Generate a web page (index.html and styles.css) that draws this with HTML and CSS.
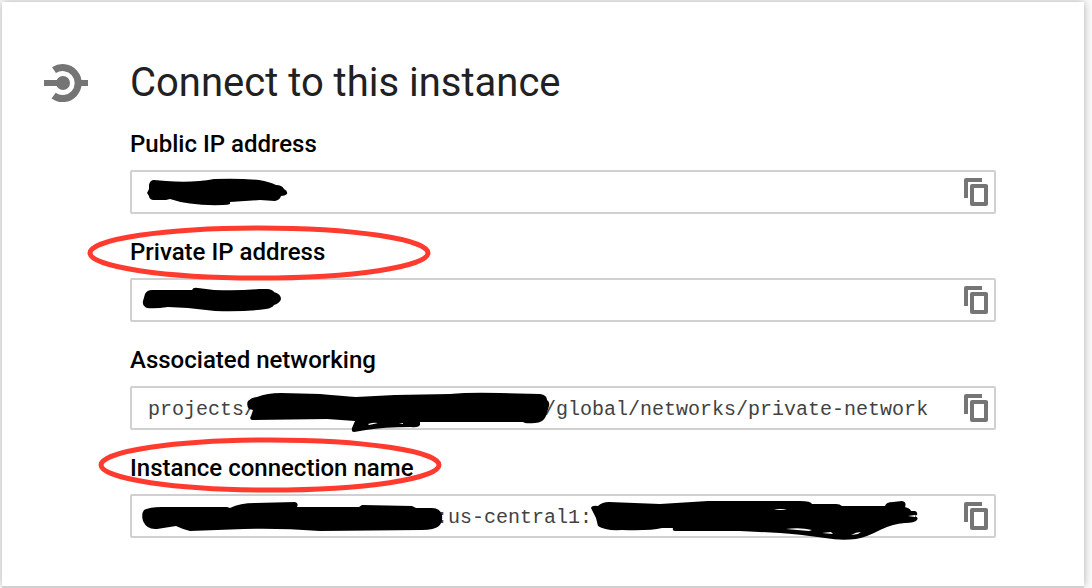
FILE: index.html
```html
<!DOCTYPE html>
<html lang="en">
<head>
<meta charset="utf-8">
<title>Connect to this instance</title>
<link rel="stylesheet" href="styles.css">
</head>
<body>
<svg class="symbols" aria-hidden="true">
  <symbol id="copy" viewBox="0 0 24 28">
    <path d="M0 20V2Q0 0 2 0H18V4H4V20Z"/>
    <path fill-rule="evenodd" d="M8 6H22Q24 6 24 8V26Q24 28 22 28H8Q6 28 6 26V8Q6 6 8 6ZM10 10V24H20V10Z"/>
  </symbol>
</svg>
<main class="card">
  <svg class="connect-icon" viewBox="44 62 44 42" aria-hidden="true">
    <path class="ring" d="M54 70.200A15.500 15.500 0 1 1 53.600 95.600"/>
    <path d="M44 80H57V86H44ZM78 80H88V86H78Z"/>
    <circle cx="63" cy="83" r="7"/>
  </svg>
  <section class="content">
    <h1 class="title">Connect to this instance</h1>
    <div class="group">
      <label class="label" for="public-ip">Public IP address</label>
      <div class="field">
        <input class="value" id="public-ip" readonly value="">
        <svg class="scribble" viewBox="130 170 866 44" aria-hidden="true">
          <path d="M149 185Q150 180 154 180L166 181Q193 183 214 179Q238 178 259 180Q270 182 276 185Q282 185 284 189Q288 191 287 194Q285 196 281 196Q280 200 275 201L260 200L230 202V204Q228 205 223 205Q190 206 170 199L166 200L153 200Q149 199 149 196L147 193L149 189Z"/>
        </svg>
        <button class="copy" type="button" aria-label="Copy public IP address"><svg class="copy-icon"><use href="#copy"/></svg></button>
      </div>
    </div>
    <div class="group">
      <label class="label" for="private-ip">Private IP address</label>
      <svg class="ellipse ellipse-private" viewBox="0 0 344 56" aria-hidden="true"><ellipse cx="172" cy="28" rx="169" ry="25"/></svg>
      <div class="field">
        <input class="value" id="private-ip" readonly value="">
        <svg class="scribble" viewBox="130 278 866 44" aria-hidden="true">
          <path d="M145 294Q147 290 152 290L192 290Q193 287 198 288L214 290Q240 291 259 289L268 289Q273 290 274 292Q281 294 281 299Q280 303 274 305Q272 308 266 309Q246 312 215 311L188 308L168 307Q155 309 147 308Q142 306 143 301Z"/>
        </svg>
        <button class="copy" type="button" aria-label="Copy private IP address"><svg class="copy-icon"><use href="#copy"/></svg></button>
      </div>
    </div>
    <div class="group">
      <label class="label" for="network">Associated networking</label>
      <div class="field">
        <input class="value" id="network" readonly value="projects/                        /global/networks/private-network">
        <svg class="scribble" viewBox="130 386 866 44" aria-hidden="true">
          <path d="M248 401Q252 397 257 397Q267 393 281 393L320 394Q343 396 356 397L395 395L450 394Q470 392 500 393L540 394Q547 395 547 400Q550 402 549 406L546 416Q543 423 535 423Q525 424 523 422L420 422V425Q418 428 411 427Q384 427 366 430L354 432Q351 432 352 428L355 421L327 419L252 420Q249 419 251 416L253 410L249 409Q246 405 248 401Z"/>
          <path class="gap" d="M368 424Q374 422 378 423Q374 424 369 425ZM399 424L403 423V424Z"/>
        </svg>
        <button class="copy" type="button" aria-label="Copy associated networking"><svg class="copy-icon"><use href="#copy"/></svg></button>
      </div>
    </div>
    <div class="group">
      <label class="label" for="connection">Instance connection name</label>
      <svg class="ellipse ellipse-instance" viewBox="0 0 344 56" aria-hidden="true"><ellipse cx="172" cy="28" rx="169" ry="25"/></svg>
      <div class="field">
        <input class="value" id="connection" readonly value="                        :us-central1:">
        <svg class="scribble" viewBox="130 494 866 44" aria-hidden="true">
          <path d="M144 510Q150 507 161 507L227 507L230 508Q240 503 255 503L295 502Q299 503 297 507L359 507L362 505L412 506L416 508H432Q440 508 442 515Q443 522 439 526Q434 530 422 530L320 531Q280 528 244 529L190 531Q182 529 176 526L157 529Q147 530 143 521Q141 514 144 510Z"/>
          <path d="M591 508Q592 505 598 506Q602 502 609 502L660 504L708 501L800 501Q811 501 812 504L836 504Q840 504 842 506L885 506Q886 502 893 502L902 501Q907 502 905 507Q910 508 911 511H915Q918 512 917 515L914 516Q919 517 917 520Q915 523 905 523Q892 524 880 530Q867 537 856 539Q841 541 825 538Q797 534 780 533L740 531L675 531Q672 531 673 528L662 528Q650 531 622 530Q605 531 598 526L596 518Z"/>
          <path class="gap" d="M774 510Q780 508 787 510ZM786 529Q800 527 812 530L809 531ZM822 533L831 532L833 534ZM851 535Q856 532 861 532L858 534ZM908 516L915 515V517Z"/>
        </svg>
        <button class="copy" type="button" aria-label="Copy instance connection name"><svg class="copy-icon"><use href="#copy"/></svg></button>
      </div>
    </div>
  </section>
</main>
</body>
</html>
```
FILE: styles.css
```css
* {
  box-sizing: border-box;
}

body {
  margin: 0;
  padding: 2px 8px 2px 2px;
  background: #fafafa;
  font-family: Roboto, sans-serif;
}

.symbols {
  position: absolute;
  width: 0;
  height: 0;
}

.card {
  display: flex;
  gap: 42px;
  padding: 56px 88px 48px 42px;
  background: #fff;
  box-shadow: 0 2px 0 #d0d0d0, 0 0 8px rgba(0, 0, 0, 0.3);
}

.connect-icon {
  flex: none;
  width: 44px;
  height: 42px;
  margin-top: 4px;
  fill: #757575;
}

.ring {
  fill: none;
  stroke: #757575;
  stroke-width: 7px;
}

.content {
  display: flex;
  flex: 1;
  flex-direction: column;
  gap: 24px;
  min-width: 0;
}

.title {
  margin: 0;
  padding-top: 2px;
  color: #212121;
  font-size: 40px;
  font-weight: 400;
  line-height: 46px;
}

.group {
  position: relative;
  display: flex;
  flex-direction: column;
  gap: 12px;
}

.label {
  color: #000;
  font-size: 24px;
  font-weight: 500;
  line-height: 28px;
}

.field {
  position: relative;
  display: flex;
  align-items: center;
  height: 44px;
  padding: 0 6px 0 16px;
  border: 2px solid #d0d0d0;
  border-radius: 2px;
}

.value {
  flex: 1;
  min-width: 0;
  padding: 4px 0 0;
  border: 0;
  outline: 0;
  background: none;
  color: #424242;
  font-family: "Liberation Mono", monospace;
  font-size: 20px;
  line-height: 24px;
}

.copy {
  display: flex;
  padding: 0;
  border: 0;
  background: none;
  cursor: pointer;
}

.copy-icon {
  width: 24px;
  height: 28px;
  fill: #757575;
}

.scribble {
  position: absolute;
  top: -2px;
  left: -2px;
  width: 866px;
  height: 44px;
  overflow: visible;
  pointer-events: none;
  fill: #000;
}

.gap {
  fill: #fff;
}

.ellipse {
  position: absolute;
  z-index: 1;
  width: 344px;
  height: 56px;
  pointer-events: none;
  fill: none;
  stroke: #ff3b30;
  stroke-width: 5px;
}

.ellipse-private {
  top: -13px;
  left: -43px;
}

.ellipse-instance {
  top: -17px;
  left: -32px;
}
```
